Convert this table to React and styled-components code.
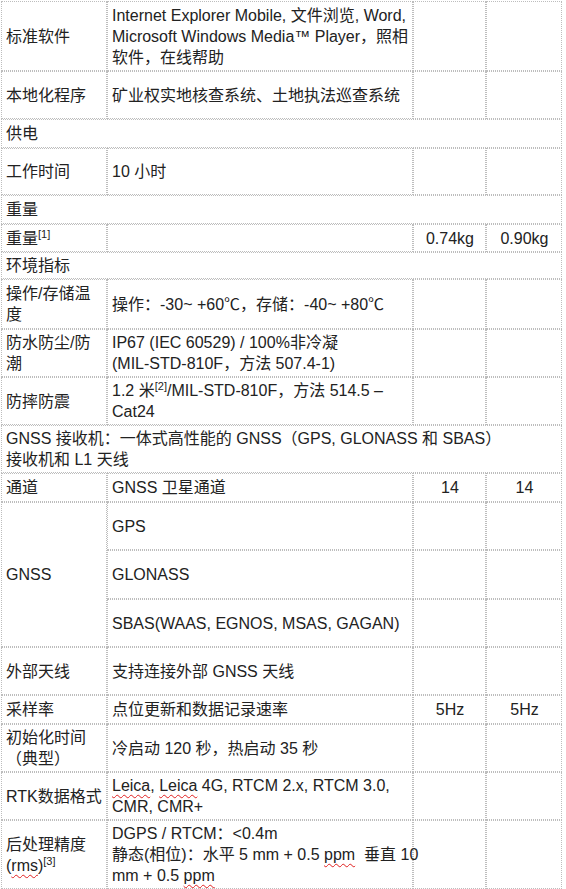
import React from 'react';
import styled, { createGlobalStyle } from 'styled-components';

const GlobalStyle = createGlobalStyle`
  body {
    margin: 0;
    background: #fff;
    font-family: "Liberation Sans", Arial, "Noto Sans CJK SC", sans-serif;
    color: #222;
  }
`;

const SpecTable = styled.table`
  table-layout: fixed;
  width: 561px;
  margin: 1px 0 0 1px;
  border-collapse: separate;
  border-spacing: 0;
  font-size: 16px;
  line-height: 21px;
`;

const Row = styled.tr`
  height: ${({ h }) => h}px;
`;

const Cell = styled.td`
  border: 1px dotted #bdbdbd;
  padding: 0 3px 0 4px;
  vertical-align: middle;
  text-align: ${({ center }) => (center ? 'center' : 'left')};
  white-space: ${({ nowrap }) => (nowrap ? 'nowrap' : 'normal')};
`;

const Sup = styled.sup`
  font-size: 11px;
  line-height: 0;
  vertical-align: 6px;
`;

const Typo = styled.span`
  text-decoration: underline wavy #e02020;
  text-decoration-thickness: 1px;
  text-underline-offset: 3px;
  text-decoration-skip-ink: none;
`;

const specRows = [
  {
    h: 70,
    label: '标准软件',
    value: <>Internet Explorer Mobile, 文件浏览, Word,<br />Microsoft Windows Media™ Player，照相<br />软件，在线帮助</>,
    nowrap: true,
  },
  { h: 48, label: '本地化程序', value: '矿业权实地核查系统、土地执法巡查系统' },
  { h: 29, section: '供电' },
  { h: 47, label: '工作时间', value: '10 小时' },
  { h: 29, section: '重量' },
  { h: 28, label: <>重量<Sup>[1]</Sup></>, value: '', a: '0.74kg', b: '0.90kg' },
  { h: 27, section: '环境指标' },
  { h: 50, label: '操作/存储温度', value: '操作：-30~ +60℃，存储：-40~ +80℃' },
  {
    h: 48,
    label: '防水防尘/防潮',
    value: <>IP67 (IEC 60529) / 100%非冷凝<br />(MIL-STD-810F，方法 507.4-1)</>,
    nowrap: true,
  },
  { h: 48, label: '防摔防震', value: <>1.2 米<Sup>[2]</Sup>/MIL-STD-810F，方法 514.5 –<br />Cat24</>, nowrap: true },
  { h: 48, section: <>GNSS 接收机：一体式高性能的 GNSS（GPS, GLONASS 和 SBAS）<br />接收机和 L1 天线</> },
  { h: 29, label: '通道', value: 'GNSS 卫星通道', a: '14', b: '14' },
];

const gnssRows = ['GPS', 'GLONASS', 'SBAS(WAAS, EGNOS, MSAS, GAGAN)'];

const tailRows = [
  { h: 48, label: '外部天线', value: '支持连接外部 GNSS 天线' },
  { h: 29, label: '采样率', value: '点位更新和数据记录速率', a: '5Hz', b: '5Hz' },
  { h: 48, label: '初始化时间（典型）', value: '冷启动 120 秒，热启动 35 秒' },
  {
    h: 48,
    label: 'RTK数据格式',
    value: <><Typo>Leica</Typo>, <Typo>Leica</Typo> 4G, RTCM 2.x, RTCM 3.0,<br />CMR, CMR+</>,
    nowrap: true,
  },
  {
    h: 69,
    label: <>后处理精度<br />(<Typo>rms</Typo>)<Sup>[3]</Sup></>,
    value: <>DGPS / RTCM：&lt;0.4m<br />静态(相位)：水平 5 mm + 0.5 <Typo>ppm</Typo> &nbsp;垂直 10<br />mm + 0.5 <Typo>ppm</Typo></>,
    nowrap: true,
  },
];

function SpecRow({ row }) {
  if (row.section) {
    return (
      <Row h={row.h}>
        <Cell colSpan={4}>{row.section}</Cell>
      </Row>
    );
  }
  return (
    <Row h={row.h}>
      <Cell>{row.label}</Cell>
      <Cell nowrap={row.nowrap}>{row.value}</Cell>
      <Cell center>{row.a}</Cell>
      <Cell center>{row.b}</Cell>
    </Row>
  );
}

export default function App() {
  return (
    <>
      <GlobalStyle />
      <SpecTable>
        <colgroup>
          <col style={{ width: 106 }} />
          <col style={{ width: 306 }} />
          <col style={{ width: 73 }} />
          <col style={{ width: 76 }} />
        </colgroup>
        <tbody>
          {specRows.map((row, i) => (
            <SpecRow key={i} row={row} />
          ))}
          {gnssRows.map((name, i) => (
            <Row h={i === 1 ? 49 : 48} key={name}>
              {i === 0 && <Cell rowSpan={3}>GNSS</Cell>}
              <Cell>{name}</Cell>
              <Cell center />
              <Cell center />
            </Row>
          ))}
          {tailRows.map((row, i) => (
            <SpecRow key={'t' + i} row={row} />
          ))}
        </tbody>
      </SpecTable>
    </>
  );
}
